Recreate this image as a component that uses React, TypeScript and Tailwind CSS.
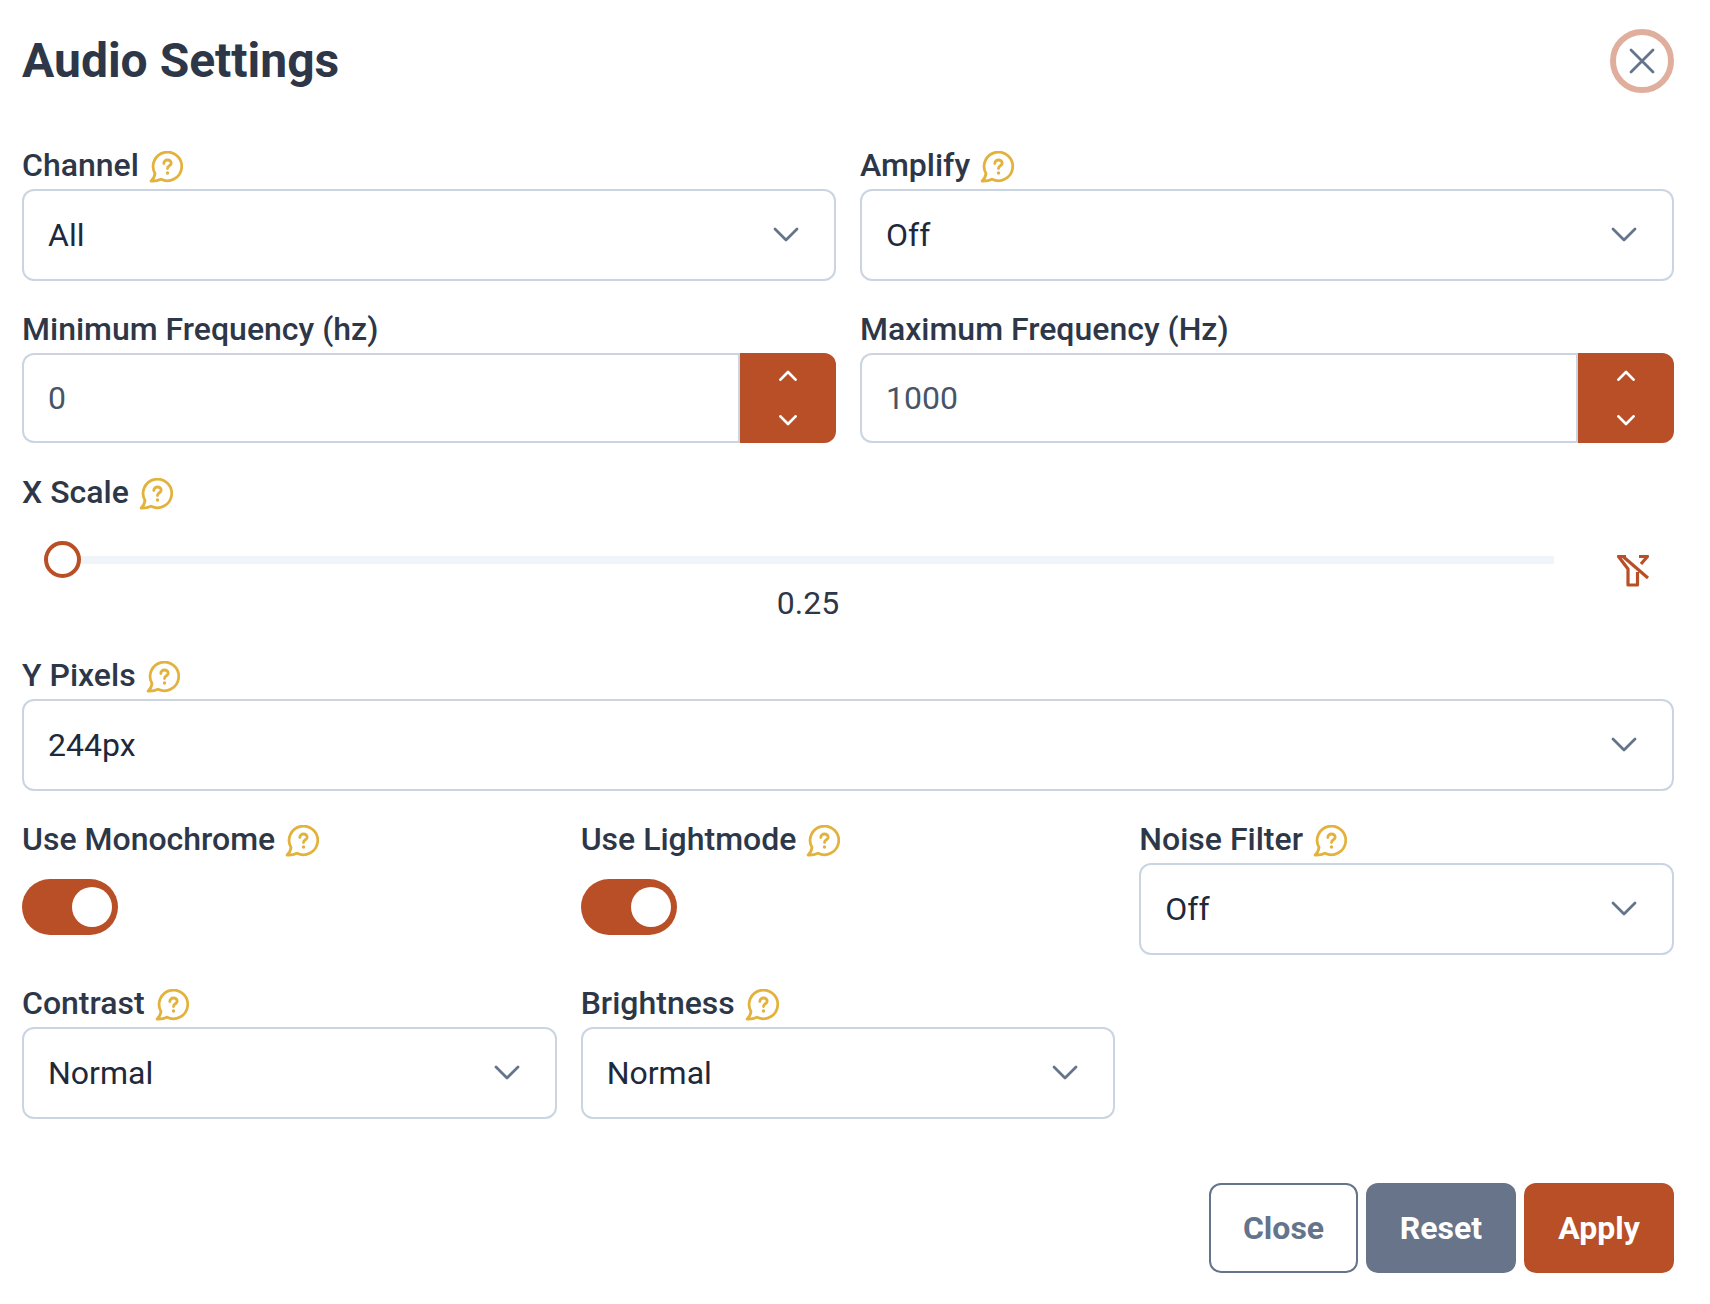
import React from "react";

const HelpIcon = () => (
  <svg width="34" height="32" viewBox="0 0 34 32" fill="none" className="shrink-0 translate-y-[2px]">
    <path
      d="M2 30c2-1.500 3.500-4 4-7.500A14.300 14.300 0 1 1 12 28.200c-3 1.500-6.500 2-10 1.800z"
      stroke="#e3b23c"
      strokeWidth="2.800"
      strokeLinejoin="round"
    />
    <path
      d="M14.800 12.500c0-2 1.600-3.500 3.700-3.500s3.700 1.400 3.700 3.200c0 2.600-3.700 2.500-3.700 5.300"
      stroke="#e3b23c"
      strokeWidth="2.800"
      strokeLinecap="round"
    />
    <circle cx="18.500" cy="22" r="1.700" fill="#e3b23c" />
  </svg>
);

const Chevron = ({
  up = false,
  thick = false,
  className = "",
}: {
  up?: boolean;
  thick?: boolean;
  className?: string;
}) => (
  <svg width="26" height="16" viewBox="0 0 26 16" fill="none" className={className}>
    <path
      d={up ? "M2 14 13 3l11 11" : "M2 2l11 11L24 2"}
      stroke="currentColor"
      strokeWidth={thick ? 4 : 2.8}
      strokeLinecap="round"
      strokeLinejoin="round"
    />
  </svg>
);

const Label = ({ text, help = true }: { text: string; help?: boolean }) => (
  <div className="h-[36px] pt-[2px] mb-[7px] flex items-center gap-[10px] text-[32px] font-medium text-[#2d3748]">
    <span>{text}</span>
    {help && <HelpIcon />}
  </div>
);

const Select = ({ label, value }: { label: string; value: string }) => (
  <div>
    <Label text={label} />
    <div className="h-[92px] flex items-center justify-between rounded-[12px] border-2 border-[#cbd5e1] pl-[24px] pr-[35px] text-[32px] text-[#1e293b]">
      <span>{value}</span>
      <Chevron className="text-[#64748b]" />
    </div>
  </div>
);

const NumberField = ({ label, value }: { label: string; value: string }) => (
  <div>
    <Label text={label} help={false} />
    <div className="h-[90px] flex rounded-[12px] border-2 border-r-0 border-[#cbd5e1]">
      <div className="flex-1 flex items-center pl-[24px] text-[32px] text-[#475569] border-r-2 border-[#cbd5e1]">{value}</div>
      <div className="w-[96px] -my-[2px] flex flex-col items-center justify-center gap-[34px] rounded-r-[12px] bg-[#b94f26] text-white">
        <Chevron up thick className="w-[18px] h-[11px]" />
        <Chevron thick className="w-[18px] h-[11px]" />
      </div>
    </div>
  </div>
);

const Toggle = ({ label }: { label: string }) => (
  <div>
    <Label text={label} />
    <div className="mt-[23px] w-[96px] h-[56px] flex items-center justify-end rounded-full bg-[#b94f26] pr-[6px]">
      <div className="w-[40px] h-[40px] rounded-full bg-white" />
    </div>
  </div>
);

const App = () => {
  return (
    <div className="w-[1710px] h-[1304px] bg-white pl-[22px] pr-[36px] pt-[29px] font-['Roboto',sans-serif]">
      <div className="flex items-center justify-between h-[64px]">
        <h1 className="text-[48px] font-bold text-[#2d3748]">Audio Settings</h1>
        <button className="w-[64px] h-[64px] flex items-center justify-center rounded-full border-[6px] border-[#e0ae9d] text-[#64748b]">
          <svg width="28" height="28" viewBox="0 0 28 28" fill="none">
            <path d="M3 3l22 22M25 3 3 25" stroke="currentColor" strokeWidth="2.800" strokeLinecap="round" />
          </svg>
        </button>
      </div>

      <div className="mt-[53px] grid grid-cols-2 gap-x-[24px] gap-y-[29px]">
        <Select label="Channel" value="All" />
        <Select label="Amplify" value="Off" />
        <NumberField label="Minimum Frequency (hz)" value="0" />
        <NumberField label="Maximum Frequency (Hz)" value="1000" />
      </div>

      <div className="mt-[30px]">
        <Label text="X Scale" />
        <div className="flex mt-[32px]">
          <div className="flex-1">
            <div className="flex items-center pl-[22px] w-[1532px]">
              <div className="w-[37px] h-[37px] rounded-full border-[4px] border-[#b94f26] bg-white shrink-0" />
              <div className="flex-1 h-[8px] bg-[#f1f5f9]" />
            </div>
            <div className="mt-[6px] text-center text-[32px] leading-[38px] text-[#2d3748] w-[1572px]">0.25</div>
          </div>
          <svg width="32" height="33" viewBox="0 0 32 33" fill="none" className="mt-[14px] mr-[25px]">
            <path d="M9 1.500H1.500L11 14v16h9.500V17" stroke="#b94f26" strokeWidth="3.200" strokeLinejoin="round" />
            <path d="M6 1.500 31 23" stroke="#b94f26" strokeWidth="3.200" />
            <path d="M22 1.500h8.500L24 9" stroke="#b94f26" strokeWidth="3.200" strokeLinejoin="round" />
          </svg>
        </div>
      </div>

      <div className="mt-[34px]">
        <Select label="Y Pixels" value="244px" />
      </div>

      <div className="mt-[29px] grid grid-cols-3 gap-x-[24px] gap-y-[29px]">
        <Toggle label="Use Monochrome" />
        <Toggle label="Use Lightmode" />
        <Select label="Noise Filter" value="Off" />
        <Select label="Contrast" value="Normal" />
        <Select label="Brightness" value="Normal" />
      </div>

      <div className="mt-[64px] flex justify-end gap-[8px] text-[32px] font-bold">
        <button className="w-[149px] h-[90px] rounded-[12px] border-2 border-[#64748b] text-[#64748b]">Close</button>
        <button className="w-[150px] h-[90px] rounded-[12px] bg-[#687489] text-white">Reset</button>
        <button className="w-[150px] h-[90px] rounded-[12px] bg-[#b94f26] text-white">Apply</button>
      </div>
    </div>
  );
};

export default App;
